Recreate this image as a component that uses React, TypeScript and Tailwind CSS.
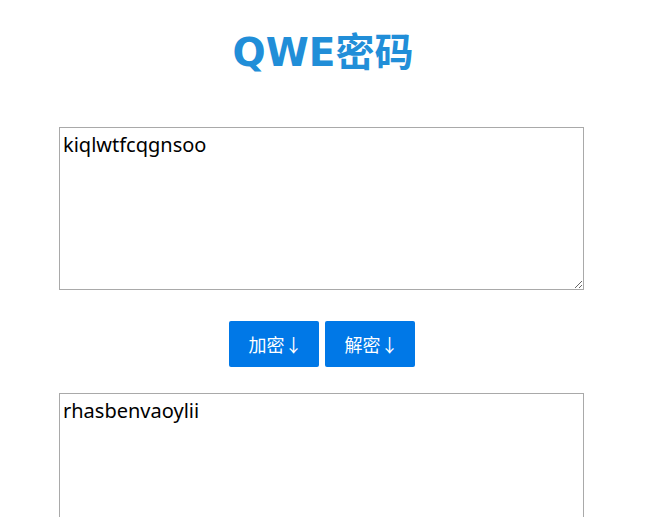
import React from "react";

export default function App() {
  return (
    <div className="w-[645px] h-[517px] overflow-hidden bg-white">
      <div className="flex flex-col items-center pr-[2px]">
        <h1 className="mt-[27px] h-[50px] flex items-center pl-[3px] text-[39px] font-bold leading-none text-[#218ed8] font-['DejaVu_Sans','Noto_Sans_CJK_SC',sans-serif]">
          QWE密码
        </h1>
        <textarea
          className="mt-[50px] w-[525px] h-[163px] border border-[#a9a9a9] px-[3px] py-[2px] text-[20px] text-black outline-none font-['Noto_Sans','Noto_Sans_CJK_SC',sans-serif]"
          defaultValue="kiqlwtfcqgnsoo"
        />
        <div className="mt-[31px] flex gap-[6px]">
          <button className="w-[90px] h-[46px] rounded-[2px] bg-[#0078e7] text-white text-[18px] flex items-center justify-center font-['Noto_Sans_CJK_SC',sans-serif]">
            <span>加密</span>
            <span className="-mr-[4px]">↓</span>
          </button>
          <button className="w-[90px] h-[46px] rounded-[2px] bg-[#0078e7] text-white text-[18px] flex items-center justify-center font-['Noto_Sans_CJK_SC',sans-serif]">
            <span>解密</span>
            <span className="-mr-[4px]">↓</span>
          </button>
        </div>
        <textarea
          className="mt-[26px] w-[525px] h-[163px] shrink-0 border border-[#a9a9a9] px-[3px] py-[2px] text-[20px] text-black outline-none font-['Noto_Sans','Noto_Sans_CJK_SC',sans-serif]"
          defaultValue="rhasbenvaoylii"
        />
      </div>
    </div>
  );
}
